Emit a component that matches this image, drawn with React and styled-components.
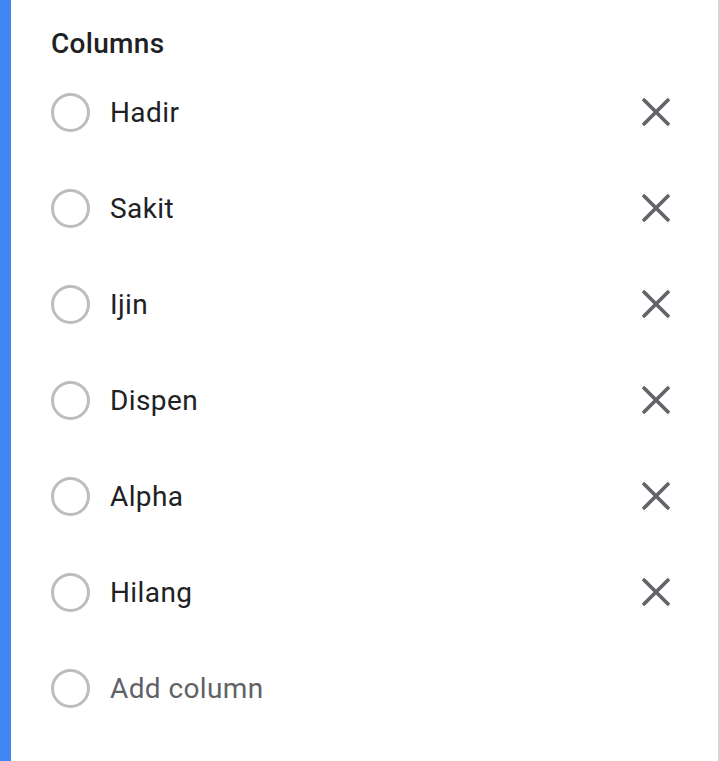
import React from 'react';
import styled, { createGlobalStyle } from 'styled-components';

const GlobalStyle = createGlobalStyle`
  html, body {
    margin: 0;
    padding: 0;
    background: #ffffff;
  }
  body {
    font-family: Roboto, "Noto Sans", Arial, sans-serif;
  }
`;

const Panel = styled.div`
  box-sizing: border-box;
  width: 720px;
  height: 761px;
  background: #ffffff;
  border-left: 11px solid #4285f4;
  border-right: 2px solid #d3d6d6;
  padding: 24px 0 0 40px;
  overflow: hidden;
`;

const Title = styled.h2`
  margin: 0;
  height: 40px;
  line-height: 40px;
  font-size: 28px;
  font-weight: 500;
  letter-spacing: 0.3px;
  color: #202124;
`;

const List = styled.ul`
  list-style: none;
  margin: 0;
  padding: 0;
`;

const Row = styled.li`
  display: flex;
  align-items: center;
  height: 96px;
  padding-right: 44px;
`;

const Radio = styled.span`
  box-sizing: border-box;
  flex: 0 0 auto;
  width: 39px;
  height: 39px;
  border-radius: 50%;
  border: 3.5px solid #bdbdbd;
`;

const Label = styled.span`
  flex: 1;
  margin-left: 20px;
  font-size: 28px;
  letter-spacing: 0.4px;
  color: ${({ $placeholder }) => ($placeholder ? '#5f6368' : '#202124')};
`;

const RemoveButton = styled.button`
  display: flex;
  align-items: center;
  justify-content: center;
  width: 36px;
  height: 36px;
  padding: 0;
  border: none;
  background: none;
  color: #5f6368;
  cursor: pointer;
`;

const CloseIcon = () => (
  <svg width="32" height="32" viewBox="0 0 32 32" fill="none">
    <path d="M3 3 L29 29 M29 3 L3 29" stroke="currentColor" strokeWidth="3.6" />
  </svg>
);

const columns = ['Hadir', 'Sakit', 'Ijin', 'Dispen', 'Alpha', 'Hilang'];

export default function App() {
  return (
    <>
      <GlobalStyle />
      <Panel>
        <Title>Columns</Title>
        <List>
          {columns.map(name => (
            <Row key={name}>
              <Radio />
              <Label>{name}</Label>
              <RemoveButton aria-label={`Remove ${name}`}>
                <CloseIcon />
              </RemoveButton>
            </Row>
          ))}
          <Row>
            <Radio />
            <Label $placeholder>Add column</Label>
          </Row>
        </List>
      </Panel>
    </>
  );
}
